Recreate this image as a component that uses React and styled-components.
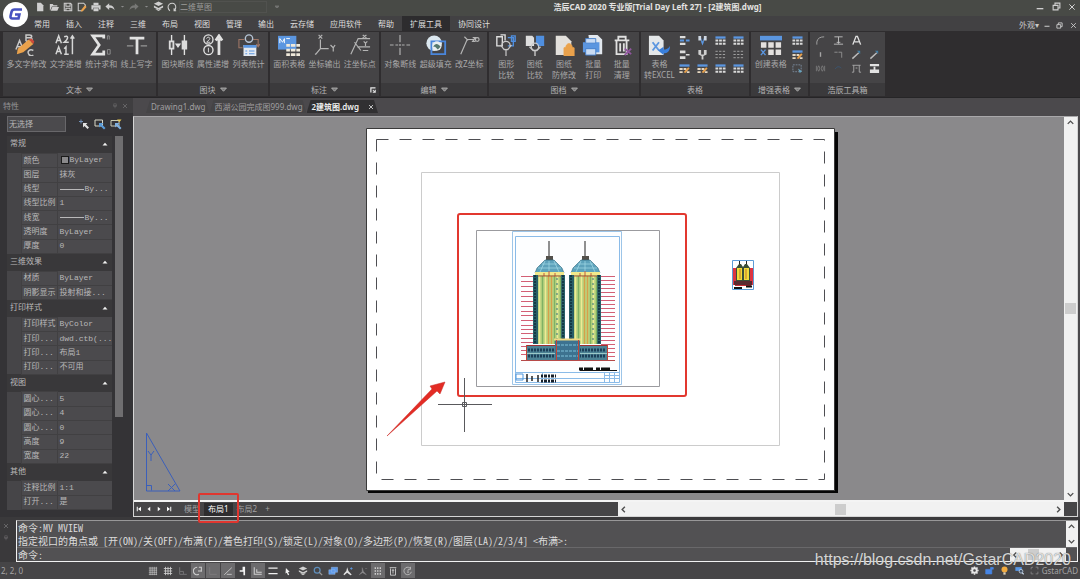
import { useState } from "react";
import styled, { createGlobalStyle, css } from "styled-components";

const GlobalStyle = createGlobalStyle`
  * {
    box-sizing: border-box;
  }
  body {
    margin: 0;
    background: #464547;
    color: #c9c8c9;
    font-family: "Noto Sans", "Noto Sans CJK SC", sans-serif;
    font-size: 8px;
    line-height: 12px;
  }
  button, select, input {
    margin: 0;
    padding: 0;
    border: none;
    background: none;
    color: inherit;
    font: inherit;
    outline: none;
  }
  svg {
    display: block;
  }
`;

const AppContainer = styled.div`
  position: relative;
  display: flex;
  flex-direction: column;
  height: 100vh;
  min-height: 560px;
  overflow: hidden;
`;

const Header = styled.header`
  display: flex;
  height: 31px;
  flex: none;
  background: linear-gradient(#484a46 0 16px, #424143 16px);
`;

const LogoButton = styled.button`
  width: 26px;
  padding-left: 2px;
  svg {
    width: 27px;
  }
`;

const HeaderRows = styled.div`
  flex: 1;
  display: flex;
  flex-direction: column;
`;

const TitleBar = styled.div`
  display: flex;
  align-items: center;
  height: 15px;
  padding: 0 0 2px 8px;
`;

const QuickTools = styled.div`
  display: flex;
  align-items: center;
  height: 12px;
  gap: 2px;
`;

const IconButton = styled.button`
  display: flex;
  flex: none;
  align-items: center;
  justify-content: center;
  width: ${({ $w }) => $w || 12}px;
  height: ${({ $h }) => $h || 12}px;
  color: ${({ $color }) => $color || "#cfcfcf"};
  background: ${({ $active }) => ($active ? "#6c6b6d" : "none")};
`;

const WorkspaceSelect = styled.select`
  width: 88px;
  height: 12px;
  margin: 0 6px 0 1px;
  border: 1px solid #51524f;
  color: #9b9b99;
  line-height: 10px;
  appearance: none;
`;

const WindowTitle = styled.h1`
  flex: 1;
  margin: 0;
  text-align: center;
  font-size: 8px;
  line-height: 12px;
  font-weight: 700;
  color: #e4e4e2;
  white-space: nowrap;
`;

const WindowButtons = styled.div`
  display: flex;
  align-items: center;
  gap: 4px;
  padding-right: 2px;
`;

const MenuRow = styled.nav`
  display: flex;
  align-items: flex-end;
  justify-content: space-between;
  height: 16px;
`;

const MenuTabs = styled.div`
  display: flex;
`;

const MenuTab = styled.button`
  height: 15px;
  padding: 0 8px;
  line-height: 14px;
  white-space: nowrap;
  color: #dededd;
  background: ${({ $active }) => ($active ? "#2d2c2e" : "none")};
`;

const Ribbon = styled.section`
  display: flex;
  flex: none;
  gap: 2px;
  height: 67px;
  padding: 1px 0 1px 3px;
  border-bottom: 1px solid #262527;
  background: #2f2d2f;
`;

const RibbonPanel = styled.div`
  display: flex;
  flex-direction: column;
  flex: 0 0 ${({ $width }) => $width}px;
  background: #454446;
`;

const RibbonBody = styled.div`
  flex: 1;
  display: flex;
  justify-content: space-evenly;
  padding-top: 2px;
`;

const RibbonButton = styled.button`
  display: flex;
  flex-direction: column;
  align-items: center;
  line-height: 11px;
  color: #a9a8a9;
  white-space: pre-line;
  svg {
    margin-bottom: 2px;
  }
`;

const SmallIconGrid = styled.div`
  display: grid;
  grid-template-columns: repeat(${({ $cols }) => $cols}, 14px);
  grid-auto-rows: 12px;
  gap: 2px 4px;
`;

const RibbonTitle = styled.div`
  position: relative;
  display: flex;
  justify-content: center;
  align-items: center;
  gap: 4px;
  height: 13px;
  color: #b4b3b4;
  background: #3b3a3c;
`;

const Launcher = styled.span`
  position: absolute;
  right: 3px;
  bottom: 3px;
`;

const Workspace = styled.main`
  flex: 1;
  display: flex;
  min-height: 0;
`;

const Properties = styled.aside`
  display: flex;
  flex-direction: column;
  flex: none;
  width: 133px;
  padding-bottom: 7px;
  background: #343336;
`;

const PropertiesTitle = styled.div`
  display: flex;
  align-items: center;
  height: 15px;
  padding: 0 3px;
  color: #949394;
  background: #3f3e40;
  span {
    flex: 1;
  }
`;

const SelectionBar = styled.div`
  display: flex;
  align-items: center;
  gap: 4px;
  padding: 3px 0 4px 7px;
  height: 23px;
`;

const SelectionSelect = styled.select`
  width: 59px;
  height: 16px;
  padding-left: 1px;
  margin-right: 8px;
  border: 1px solid #68676a;
  background: #4b4a4d;
  color: #b7b6b7;
  appearance: none;
`;

const PropertiesBody = styled.div`
  flex: 1;
  display: flex;
  min-height: 0;
  padding-left: 7px;
`;

const PropertyTable = styled.table`
  width: 105px;
  height: 100%;
  border-collapse: collapse;
  table-layout: fixed;
  font-family: "Liberation Mono", "Noto Sans CJK SC", monospace;
  line-height: 10px;
  color: #b9b8b9;
  white-space: nowrap;
  th, td {
    padding: 0;
    text-align: left;
    font-weight: 400;
  }
`;

const GroupCell = styled.th`
  height: 17px;
  background: #39383a;
  div {
    display: flex;
    align-items: center;
    justify-content: space-between;
    padding: 0 4px 0 3px;
  }
`;

const GutterCell = styled.td`
  width: 14px;
  height: 14px;
  background: #464548;
`;

const NameCell = styled.th`
  width: 36px;
  background: #4b4a4d;
  border: 1px solid #414042;
  div {
    padding-left: 2px;
  }
`;

const ValueCell = styled.td`
  overflow: hidden;
  background: #4b4a4d;
  border-bottom: 1px solid #414042;
  div {
    display: flex;
    align-items: center;
    padding-left: 2px;
  }
`;

const Swatch = styled.span`
  width: 8px;
  height: 8px;
  margin: 0 1px;
  border: 1px solid #1b1b1b;
  background: #8a898b;
`;

const LineSample = styled.span`
  width: 24px;
  height: 1px;
  margin-right: 1px;
  background: #b9b8b9;
`;

const PropertiesScroll = styled.div`
  width: 8px;
  height: 75%;
  margin-left: 3px;
  background: #6f6e70;
`;

const DocumentArea = styled.section`
  flex: 1;
  display: flex;
  flex-direction: column;
  min-width: 0;
  padding-right: 2px;
  background: #4b494c;
`;

const DocumentTabs = styled.div`
  display: flex;
  align-items: flex-end;
  height: 18px;
  padding: 0 0 3px 13px;
`;

const DocumentTab = styled.button`
  display: flex;
  align-items: center;
  gap: 9px;
  height: 13px;
  padding: 0 4px 0 5px;
  white-space: nowrap;
  color: ${({ $active }) => ($active ? "#f0f0f0" : "#a09fa0")};
  font-weight: ${({ $active }) => ($active ? 600 : 400)};
  background: ${({ $active }) => ($active ? "#313032" : "#454446")};
  clip-path: polygon(4px 0, calc(100% - 4px) 0, 100% 100%, 0 100%);
`;

const DocumentFrame = styled.div`
  flex: 1;
  display: flex;
  flex-direction: column;
  min-height: 0;
  border: 1px solid #d5d5d5;
  border-top-color: #a9a8aa;
`;

const CanvasRow = styled.div`
  flex: 1;
  display: flex;
  min-height: 0;
  background: #8a898b;
`;

const Drawing = styled.svg`
  flex: 1;
  min-width: 0;
  height: 100%;
`;

const scrollbar = css`
  display: flex;
  align-items: center;
  justify-content: space-between;
  background: #f1f1f1;
  color: #4d4d4d;
`;

const VerticalScroll = styled.div`
  ${scrollbar}
  flex-direction: column;
  width: ${({ $width }) => $width || 13}px;
`;

const HorizontalScroll = styled.div`
  ${scrollbar}
  width: ${({ $width }) => $width};
`;

const Thumb = styled.span`
  width: 11px;
  height: 11px;
  background: #cdcdcd;
`;

const LayoutRow = styled.div`
  display: flex;
  justify-content: space-between;
  height: 16px;
  padding-right: 13px;
  border-top: 2px solid #f4f4f4;
  background: #464547;
`;

const LayoutTabs = styled.div`
  display: flex;
  align-items: center;
`;

const LayoutTabList = styled(LayoutTabs)`
  flex: 1;
  padding-left: 6px;
`;

const LayoutTab = styled.button`
  height: 13px;
  padding: 0 4px;
  white-space: nowrap;
  color: ${({ $active }) => ($active ? "#ffffff" : "#a3a2a3")};
  background: ${({ $active }) => ($active ? "#2e2d2f" : "none")};
`;

const LayoutTabSlot = styled.div`
  position: relative;
`;

const TabHighlight = styled.span`
  position: absolute;
  z-index: 2;
  inset: -10px -6px -7px;
  border: 2px solid #e0362f;
  border-radius: 2px;
  pointer-events: none;
`;

const CommandArea = styled.section`
  display: flex;
  flex: none;
  height: 45px;
  padding: 3px 2px 0 0;
  background: #3a393b;
`;

const CommandGutter = styled.div`
  display: flex;
  flex-direction: column;
  width: 16px;
`;

const CommandBox = styled.div`
  flex: 1;
  display: flex;
  flex-direction: column;
  border: 1px solid #f2f2f2;
  border-top-color: #989798;
  background: #525153;
  font-family: "Noto Sans Mono CJK SC", "Noto Sans CJK SC", monospace;
  font-size: 10px;
  line-height: 13px;
  color: #dcdcdc;
`;

const CommandHistory = styled.div`
  flex: 1;
  display: flex;
  justify-content: space-between;
  border-bottom: 1px solid #69686a;
  p {
    margin: 0;
    padding-left: 1px;
    white-space: pre;
  }
`;

const CommandPrompt = styled.label`
  display: flex;
  height: 13px;
  padding-left: 1px;
  padding-right: 11px;
  input {
    flex: 1;
  }
`;

const StatusBar = styled.footer`
  display: flex;
  flex: none;
  align-items: center;
  height: 17px;
  padding: 0 2px 0 1px;
  line-height: 10px;
  color: #a5a4a5;
  background: #464547;
`;

const Coordinates = styled.output`
  width: 145px;
`;

const StatusTools = styled.div`
  flex: 1;
  display: flex;
  gap: 1px;
`;

const Watermark = styled.div`
  position: absolute;
  right: 9px;
  bottom: 10px;
  font-family: "Liberation Sans", Arial, sans-serif;
  font-size: 16px;
  line-height: 18px;
  color: rgba(240, 240, 240, 0.85);
  text-shadow: 0 0 1px rgba(60, 60, 60, 0.8);
  pointer-events: none;
`;

const BLUE = "#5b96e0";
const ORANGE = "#eaa24c";

const ICONS = {
  newFile: <path d="M5 2h9l6 6v14H5z" fill="currentColor" />,
  open: <path d="M2 5h7l2 3h9v3H7L3 20H2zM8 12h16l-4 9H4z" fill="currentColor" />,
  save: (
    <path
      d="M3 3h15l3 3v15H3zM7 3v7h10V3M7 21v-6h10v6"
      fill="none"
      stroke="currentColor"
      strokeWidth="2.5"
    />
  ),
  saveAs: (
    <>
      <path d="M3 3h13l4 4v4l-8 10H3z" fill="none" stroke="#cfcfcf" strokeWidth="2.5" />
      <path d="M10 19l9-11 4 4-9 10-5 1z" fill={ORANGE} />
    </>
  ),
  print: (
    <path d="M6 2h12v5H6zM1 8h22v10h-4v-4H5v4H1zM6 15h12v7H6z" fill="currentColor" />
  ),
  undo: <path d="M10 3v5c8 0 12 4 13 12-3-5-7-6-13-6v5L1 11z" fill="currentColor" />,
  redo: <path d="M14 3v5C6 8 2 12 1 20c3-5 7-6 13-6v5l9-8z" fill="currentColor" />,
  caret: <path d="M4 9h16l-8 8z" fill="currentColor" />,
  layers: (
    <path
      d="M12 1l10 5-10 5L2 6zM2 10l10 5 10-5v4l-10 5-10-5zM5 18l7 4 7-4"
      fill="currentColor"
    />
  ),
  refresh: (
    <path
      d="M7 21c-5-4-6-11-2-15s11-4 14 0 3 11-2 15m0-6v6h5"
      fill="none"
      stroke="currentColor"
      strokeWidth="2.5"
    />
  ),
  bars: <path d="M4 7h16v3H4zM7 14h10v2H7z" fill="currentColor" />,
  minimize: <path d="M2 15h20v4H2z" fill="currentColor" />,
  restore: (
    <path
      d="M3 9h13v12H3zM8 9V3h13v13h-5"
      fill="none"
      stroke="currentColor"
      strokeWidth="3"
    />
  ),
  close: <path d="M4 4l16 16M20 4L4 20" stroke="currentColor" strokeWidth="3" />,
  chevron: (
    <path d="M2 7l10 11L22 7z" fill="#777" stroke="currentColor" strokeWidth="3" />
  ),
  arrowUp: <path d="M6 15l6-6 6 6" fill="none" stroke="currentColor" strokeWidth="3" />,
  arrowDown: <path d="M6 9l6 6 6-6" fill="none" stroke="currentColor" strokeWidth="3" />,
  arrowLeft: <path d="M15 6l-6 6 6 6" fill="none" stroke="currentColor" strokeWidth="3" />,
  arrowRight: <path d="M9 6l6 6-6 6" fill="none" stroke="currentColor" strokeWidth="3" />,
  triangleUp: <path d="M2 18h20L12 7z" fill="#f2f2f2" />,
  launcher: (
    <path d="M1 22V1h21v5H6v16zM12 10l7 7v-6h4v12H11v-4h5l-6-6z" fill="#e8e8e8" />
  ),
  pin: <path d="M7 3h10v9H7zM4 12h16M12 12v9" fill="none" stroke="currentColor" strokeWidth="2" />,
  first: <path d="M3 3h4v18H3zM20 3v18L8 12z" fill="currentColor" />,
  prev: <path d="M17 3v18L6 12z" fill="currentColor" />,
  next: <path d="M7 3v18l11-9z" fill="currentColor" />,
  last: <path d="M17 3h4v18h-4zM4 3v18l12-9z" fill="currentColor" />,

  multiText: (
    <>
      <path d="M1 17l4-10 4 10M3 14h4M12 8V1h4c3 0 3 3 0 3h-4 4c4 0 3 4 0 4h-4M20 18c-4-2-7 1-5 4 1 2 3 2 5 1" fill="none" stroke="#c8c8c8" strokeWidth="1.6" />
      <path d="M3 16L15 6l5 5L9 20l-7 2z" fill={ORANGE} />
      <path d="M15 6l3-1 3 3-1 3z" fill="#cf4a3a" />
    </>
  ),
  textIncrement: (
    <g fill="none" stroke="#d6d6d6" strokeWidth="1.6">
      <path d="M1 10l3-8 3 8M2 7h4M1 22l3-8 3 8M2 19h4M10 3c5-2 5 2 0 6h5M10 16l2-2v8M10 22h5" />
      <path d="M19 22V3M17 5l2-3 2 3" />
    </g>
  ),
  sigma: (
    <>
      <path d="M15 5V2H3l7 10-7 10h12v-4" fill="none" stroke="#e2e2e2" strokeWidth="3" />
      <path d="M19 6V2h2v4M19 22v-5h3v5z" fill="none" stroke="#8f8f8f" strokeWidth="1" />
    </>
  ),
  lineText: (
    <>
      <path d="M4 3h16v3h-6.500v16h-3V6H4z" fill="#e2e2e2" />
      <path d="M1 13h7M16 13h7" stroke="#969696" strokeWidth="1.500" />
    </>
  ),
  breakLine: (
    <>
      <path d="M5 1v22M19 1v22M10 11h4l-2 3z" stroke="#e2e2e2" strokeWidth="1.5" fill="#e2e2e2" />
      <path d="M2 7h6v10H2zM16 7h6v10h-6z" fill="#dcdcdc" />
      <path d="M5 9v6" stroke="#555" strokeWidth="2" />
    </>
  ),
  attrIncrement: (
    <g fill="none" stroke="#e2e2e2" strokeWidth="1.5">
      <circle cx="7" cy="6" r="5" />
      <circle cx="7" cy="17.500" r="5" />
      <path d="M5 5c1-3 5-1 3 1l-3 3h4M7 15v5" strokeWidth="1" />
      <path d="M18.500 23V5M15 7l3.500-5L22 7" strokeWidth="3" />
    </g>
  ),
  listStats: (
    <>
      <path d="M5 15H1V6h6M16 6h6v7M20 11l2 3 2-3" fill="none" stroke="#9d7565" strokeWidth="1.2" />
      <circle cx="12" cy="5" r="4" fill="none" stroke="#b6c5d6" strokeWidth="1.500" />
      <path d="M6 12h14v12H6z" fill="#e3e9f0" />
      <path d="M6 12h14v3H6zM8 18h2v1H8zM8 21h2v1H8zM12 18h6v1h-6zM12 21h6v1h-6z" fill={BLUE} />
    </>
  ),
  areaTable: (
    <>
      <path d="M0 2h20v15H0z" fill={BLUE} />
      <path d="M2 10V5l3 4 2-4v5M9 5h4" stroke="#fff" fill="none" />
      <path d="M9 11h4v3H9zM14 11h5v3h-5zM20 11h4v3h-4zM9 16h4v3H9zM14 16h5v3h-5zM20 16h4v3h-4zM9 21h4v3H9zM14 21h5v3h-5zM20 21h4v3h-4z" fill="#efe9da" />
    </>
  ),
  coordOutput: (
    <g fill="none" stroke="#b5b5b5" strokeWidth="1.300">
      <path d="M7 6v10h9M7 16l-5 6h-1M5 1l4 4M9 1L5 5M18 12l3 3 2-3M21 15v4" />
    </g>
  ),
  coordMark: (
    <g fill="none" stroke="#b5b5b5" strokeWidth="1.300">
      <path d="M2 22L10 5h13M6 9l7 9M12 14h11M9 14h3M15 1l4 3M19 1l-4 3M16 8l2 2 2-2M18 10v3M15 18h6" />
    </g>
  ),
  alignBreak: (
    <path d="M12 1v8M12 15v8M1 12h4M7 12h3M14 12h3M19 12h4M12 11v2" stroke="#b0b0b0" strokeWidth="1.300" />
  ),
  superFill: (
    <>
      <circle cx="10" cy="10" r="8.500" fill="#dbe7ef" />
      <path d="M7 8h15v14H7z" fill="none" stroke="#4a86dc" strokeWidth="2" />
      <circle cx="13" cy="13" r="5" fill="#e8eef0" />
      <path d="M9 14c2-4 5-4 8 0l-3 3-3-3z" fill="#54786f" />
    </>
  ),
  zCoord: (
    <path d="M3 22L10 6h7M7 3l4 4M16 4h3l-3 4h3M21 4a2 2 0 1 1 0 4 2 2 0 0 1 0-4" fill="none" stroke="#b5b5b5" strokeWidth="1.300" />
  ),
  compareShape: (
    <>
      <path d="M2 3h6v10H2zM6 1h5v6" fill="none" stroke="#dedede" strokeWidth="1.500" />
      <path d="M14 4h6v9h-6M18 2h4v6h-4z" fill="none" stroke="#4f8fe0" strokeWidth="1.500" />
      <path d="M6 12l4 5h4l4-5M12 8a4.500 4.500 0 1 1 0 9 4.500 4.500 0 0 1 0-9M12 17v7" fill="none" stroke="#c9c9c9" strokeWidth="1.300" />
    </>
  ),
  compareSheet: (
    <>
      <path d="M2 2h7l2 2v9H2z" fill="#dedede" />
      <path d="M13 2h9v11h-7l-2-3z" fill="#4f8fe0" />
      <path d="M6 14l4 4h4l4-4M12 18v6" fill="none" stroke="#c9c9c9" strokeWidth="1.500" />
      <circle cx="12" cy="14" r="4" fill="none" stroke="#c9c9c9" strokeWidth="1.300" />
    </>
  ),
  sheetLock: (
    <>
      <path d="M3 2h11l6 6v15H3z" fill="#e3e0dc" />
      <path d="M12 15h11v9H12zM14 15c0-6 7-6 7 0" fill={ORANGE} stroke={ORANGE} />
    </>
  ),
  batchPrint: (
    <>
      <path d="M7 1h10l5 5v16H10" fill="#e2e8ef" />
      <path d="M1 9h18v11H1z" fill={BLUE} />
      <path d="M4 5h11v5H4zM4 16h11v7H4z" fill="#c9dcf4" stroke="#447fca" strokeWidth="1" />
    </>
  ),
  batchClean: (
    <>
      <path d="M4 7h16M8 7V3h8v4M6 7v15h11V7M10 10v9M14 10v9" fill="none" stroke="#e0e0e0" strokeWidth="2" />
      <path d="M15 16l7 6M22 16l-7 7" stroke="#91569f" strokeWidth="2" />
    </>
  ),
  toExcel: (
    <>
      <path d="M1 2h11l5 5v16H1z" fill="#e4e7e9" />
      <path d="M5 9l7 9M12 9l-7 9" stroke={BLUE} strokeWidth="2" />
      <path d="M11 18l6-4v3c3 0 5-1 7-4 0 6-3 8-7 8v2z" fill="#397fdc" />
    </>
  ),
  createTable: (
    <>
      <path d="M0 2h24v5H0z" fill={BLUE} />
      <path d="M1 9h6v6H1zM9 9h6v6H9zM17 9h6v6h-6zM9 17h6v6H9zM17 17h6v6h-6z" fill="#e3e0de" />
      <path d="M1 17l5 6M6 17l-5 6" stroke={BLUE} strokeWidth="1.500" />
    </>
  ),

  rowInsert: (
    <>
      <path d="M2 2h12v5H2zM2 17h12v5H2z" fill="#dcdcdc" />
      <path d="M2 10h9v4H2zM15 10h8v4h-8z" fill={BLUE} />
    </>
  ),
  colInsert: (
    <>
      <path d="M3 2h6v10H3zM15 2h6v10h-6z" fill="#cfd7e2" />
      <path d="M9 6l3 8 3-8v9l-3 8-3-8z" fill={BLUE} />
    </>
  ),
  rowPlain: <path d="M2 3h12v6H2zM2 16h12v6H2zM15 11h8v3h-8z" fill="#dcdcdc" />,
  colPlain: <path d="M3 2h6v10h6V2h6v10l-7 3v8h-4v-8l-7-3z" fill="#cfcfcf" />,
  tableBlue: (
    <>
      <path d="M1 3h22v5H1z" fill={BLUE} />
      <path d="M1 10h6v4H1zM9 10h6v4H9zM17 10h6v4h-6zM1 17h6v4H1zM9 17h6v4H9zM17 17h6v4h-6z" fill="#dadada" />
    </>
  ),
  tableDotted: (
    <path d="M1 5h22M1 12h22M1 19h22" stroke="#a9a9a9" strokeWidth="2" strokeDasharray="5 3" />
  ),
  tableOrange: (
    <>
      <path d="M1 3h22v5H1z" fill={BLUE} />
      <path d="M1 11h7v4H1zM10 11h6v4h-6zM1 18h7v4H1zM17 18h6v4h-6z" fill="#e6d8c2" />
      <path d="M10 20L20 9l3 3-9 10z" fill={ORANGE} />
    </>
  ),
  selectTable: (
    <>
      <path d="M2 4h18v15H2z" fill="none" stroke="#79899a" strokeWidth="2" strokeDasharray="4 2" />
      <path d="M13 12l9 6-5 4z" fill="#68a4bf" />
    </>
  ),

  arc: <path d="M4 21V15C5 7 12 4 20 4" fill="none" stroke="#a7a7a7" strokeWidth="2" />,
  beam: <path d="M3 4h18M12 4v15M8 16h8M2 20h20" fill="none" stroke="#bfbfbf" strokeWidth="2" />,
  letterA: <path d="M4 21L11 3h3l7 18M8 15h9" fill="none" stroke="#e0e0e0" strokeWidth="3" />,
  tick: <path d="M12 7v10" stroke="#a5a5a5" strokeWidth="3" />,
  corner: <path d="M3 7h7M12 7h7v12" fill="none" stroke="#929292" strokeWidth="2" />,
  pencil: (
    <>
      <path d="M3 21L17 8" stroke="#bdbdbd" strokeWidth="3" />
      <path d="M13 4h7v7z" fill="#427ea5" />
    </>
  ),
  zeros: (
    <path d="M3 6v12M8 6c-3 4-3 8 0 12 3-4 3-8 0-12M16 6c-3 4-3 8 0 12 3-4 3-8 0-12M21 6v12" fill="none" stroke="#8b8b8b" strokeWidth="1.500" />
  ),
  dot: <path d="M5 13c3-6 9-6 13-2" fill="none" stroke="#3a5675" strokeWidth="2" />,
  gate: <path d="M3 5h18M6 5v15H2M18 5v15h4M10 11h4" fill="none" stroke="#a8a8a8" strokeWidth="2" />,
  stamp: <path d="M2 2h20v5H2zM10 8h4v6h-4zM2 14h20v8H2z" fill="#e2e2e2" />,

  pickAdd: (
    <>
      <path d="M6 3v8M2 7h8" stroke="#7392ba" strokeWidth="2" />
      <path d="M10 10h9l-3 3 6 6-3 3-6-6-3 3z" fill="#e1e1e1" />
    </>
  ),
  pickWindow: (
    <>
      <path d="M2 4h15v12H2z" fill="none" stroke="#d9d9c8" strokeWidth="2" />
      <path d="M10 10h9l-3 3 7 7-3 3-7-7-3 3z" fill="#5a9bd8" />
    </>
  ),
  pickFilter: (
    <>
      <path d="M2 5h16v11H2z" fill="none" stroke="#c9cbb4" strokeWidth="2" />
      <path d="M14 3h9l-4 5z" fill="#e8c952" />
      <path d="M10 10h9l-3 3 7 7-3 3-7-7-3 3z" fill="#7fb0e0" />
    </>
  ),

  snap: <path d="M5 2v20M10 2v20M15 2v20M20 2v20M2 5h20M2 10h20M2 15h20M2 20h20" stroke="currentColor" strokeWidth="1.500" />,
  grid: <path d="M6 2v20M12 2v20M18 2v20M2 6h20M2 12h20M2 18h20" stroke="currentColor" strokeWidth="2" />,
  ortho: <path d="M4 3v17h17M5 13h8v6" fill="none" stroke="#7d7c7e" strokeWidth="2" />,
  polar: <path d="M10 3a9 9 0 1 0 4 17M14 3h6v11M12 12h9" fill="none" stroke="currentColor" strokeWidth="2.500" />,
  osnap: <path d="M4 3v17h17" fill="none" stroke="#858486" strokeWidth="1.500" />,
  otrack: <path d="M3 21L21 4M9 20h12" fill="none" stroke="currentColor" strokeWidth="2" />,
  dynUcs: <path d="M11 2h6v20h-4v-8H4v-4h7z" fill="#f2f2f2" />,
  dynInput: <path d="M3 3v17h18M9 8v7h12" fill="none" stroke="currentColor" strokeWidth="2.500" />,
  lineWeight: <path d="M1 5h22M1 18h22" stroke="#efefef" strokeWidth="3" />,
  cursor: <path d="M7 5l9 9-4 1 3 6-3 1-3-6-3 2z" fill="#ededed" />,
  search: (
    <>
      <circle cx="10" cy="10" r="7" fill="none" stroke="#5f8fbd" strokeWidth="3" />
      <path d="M15 15l7 7" stroke="#9a9a9a" strokeWidth="3" />
    </>
  ),
  quickView: <path d="M8 3h15v12H8zM2 9h15v11H2z" fill="#5d98e8" stroke="#a6c6f0" strokeWidth="1" />,
  annoScale: (
    <>
      <path d="M10 3l3 9 8 9-3 1-8-6-7 6-2-2 7-8z" fill="#e1e1e1" />
      <path d="M17 6h6M20 3v6" stroke={BLUE} strokeWidth="2" />
    </>
  ),
  annoAuto: <path d="M10 4l3 9 7 8-9-5-8 5 7-8zM17 6h5" fill="#8c8b8d" stroke="#8c8b8d" />,
  sheetGrid: (
    <path d="M4 5h16M4 12h16M4 19h16" stroke="#d6d6d6" strokeWidth="4" strokeDasharray="3 3" />
  ),
  cleanScreen: <path d="M4 4h16M6 6v16h12V6M12 8v10M9 10h6" fill="none" stroke="#d7d7d7" strokeWidth="2" />,
  cycle: <path d="M17 5a9 9 0 1 0 3 9M18 2v6h-6M12 9v5M10 15h4" fill="none" stroke="#c1c1c1" strokeWidth="2" />,
  gear: (
    <>
      <circle cx="12" cy="12" r="6" fill="none" stroke="#e6e6e6" strokeWidth="5" />
      <path d="M12 1v4M12 19v4M1 12h4M19 12h4M4 4l3 3M17 17l3 3M4 20l3-3M17 7l3-3" stroke="#e6e6e6" strokeWidth="4" />
    </>
  ),
  lock: <path d="M2 9h16v12H2zM15 9V4h7v5" fill="#4684e3" stroke="#4684e3" strokeWidth="2" />,
  bulb: (
    <>
      <circle cx="12" cy="9" r="8" fill="#f1aa3f" />
      <path d="M9 17h6v6H9z" fill="#ddd1bb" />
    </>
  ),
  monitor: (
    <>
      <path d="M1 3h17v10H1z" fill="#5797e6" />
      <circle cx="16" cy="14" r="5" fill="#46566b" stroke="#c7d6e8" strokeWidth="2" />
      <path d="M19 18l4 4" stroke="#c7d6e8" strokeWidth="3" />
    </>
  ),
  frame: (
    <path d="M3 9V4l5-1M15 3h6v6M21 15v6h-6M9 21H3v-6" fill="none" stroke="#8e8d8f" strokeWidth="2" />
  ),
};

function Icon({ name, size = 12 }) {
  return (
    <svg width={size} height={size} viewBox="0 0 24 24" aria-hidden="true">
      {ICONS[name]}
    </svg>
  );
}

const menus = [
  "常用",
  "插入",
  "注释",
  "三维",
  "布局",
  "视图",
  "管理",
  "输出",
  "云存储",
  "应用软件",
  "帮助",
  "扩展工具",
  "协同设计",
];

const ribbonPanels = [
  {
    title: "文本",
    width: 153,
    arrow: true,
    tools: [
      ["multiText", "多文字修改"],
      ["textIncrement", "文字递增"],
      ["sigma", "统计求和"],
      ["lineText", "线上写字"],
    ],
  },
  {
    title: "图块",
    width: 110,
    arrow: true,
    tools: [
      ["breakLine", "图块断线"],
      ["attrIncrement", "属性递增"],
      ["listStats", "列表统计"],
    ],
  },
  {
    title: "标注",
    width: 109,
    arrow: true,
    launcher: true,
    tools: [
      ["areaTable", "面积表格"],
      ["coordOutput", "坐标输出"],
      ["coordMark", "注坐标点"],
    ],
  },
  {
    title: "编辑",
    width: 106,
    arrow: true,
    tools: [
      ["alignBreak", "对象断线"],
      ["superFill", "超级填充"],
      ["zCoord", "改Z坐标"],
    ],
  },
  {
    title: "图档",
    width: 150,
    arrow: true,
    tools: [
      ["compareShape", "图形\n比较"],
      ["compareSheet", "图纸\n比较"],
      ["sheetLock", "图纸\n防修改"],
      ["batchPrint", "批量\n打印"],
      ["batchClean", "批量\n清理"],
    ],
  },
  {
    title: "表格",
    width: 108,
    tools: [["toExcel", "表格\n转EXCEL"]],
    cols: 4,
    small: [
      "rowInsert",
      "colInsert",
      "tableBlue",
      "tableBlue",
      "rowPlain",
      "colPlain",
      "tableDotted",
      "tableDotted",
      "tableOrange",
      "tableOrange",
      "tableBlue",
      "tableBlue",
    ],
  },
  {
    title: "增强表格",
    width: 57,
    arrow: true,
    tools: [["createTable", "创建表格"]],
    cols: 1,
    small: ["tableBlue", "tableOrange", "selectTable"],
  },
  {
    title: "浩辰工具箱",
    width: 75,
    tools: [],
    cols: 4,
    small: [
      "arc",
      "beam",
      "letterA",
      null,
      "tick",
      "corner",
      "pencil",
      "pencil",
      "zeros",
      "dot",
      "gate",
      "stamp",
    ],
  },
];

const propertyGroups = [
  {
    title: "常规",
    rows: [
      ["颜色", "ByLayer", "swatch"],
      ["图层", "抹灰"],
      ["线型", "By...", "line"],
      ["线型比例", "1"],
      ["线宽", "By...", "line"],
      ["透明度", "ByLayer"],
      ["厚度", "0"],
    ],
  },
  {
    title: "三维效果",
    rows: [
      ["材质", "ByLayer"],
      ["阴影显示", "投射和接..."],
    ],
  },
  {
    title: "打印样式",
    rows: [
      ["打印样式", "ByColor"],
      ["打印...", "dwd.ctb(..."],
      ["打印...", "布局1"],
      ["打印...", "不可用"],
    ],
  },
  {
    title: "视图",
    rows: [
      ["圆心...", "5"],
      ["圆心...", "4"],
      ["圆心...", "0"],
      ["高度", "9"],
      ["宽度", "22"],
    ],
  },
  {
    title: "其他",
    rows: [
      ["注释比例", "1:1"],
      ["打开...", "是"],
    ],
  },
];

const statusTools = [
  ["snap"],
  ["grid"],
  ["ortho"],
  ["polar", true],
  ["osnap", true],
  ["otrack", true],
  ["dynUcs"],
  ["dynInput", true],
  ["lineWeight"],
  ["cursor"],
  ["layers"],
  ["search"],
  ["quickView"],
  ["annoScale"],
  ["annoAuto"],
  ["sheetGrid", true],
  ["cleanScreen"],
  ["cycle", true],
];

function RibbonGroup({ panel }) {
  return (
    <RibbonPanel $width={panel.width}>
      <RibbonBody>
        {panel.tools.map(([icon, label]) => (
          <RibbonButton key={label}>
            <Icon name={icon} size={22} />
            {label}
          </RibbonButton>
        ))}
        {panel.small && (
          <SmallIconGrid $cols={panel.cols}>
            {panel.small.map((icon, index) =>
              icon ? (
                <IconButton key={index} $w={14} aria-label={icon}>
                  <Icon name={icon} size={11} />
                </IconButton>
              ) : (
                <span key={index} />
              )
            )}
          </SmallIconGrid>
        )}
      </RibbonBody>
      <RibbonTitle>
        {panel.title}
        {panel.arrow && <Icon name="chevron" size={7} />}
        {panel.launcher && (
          <Launcher>
            <Icon name="launcher" size={6} />
          </Launcher>
        )}
      </RibbonTitle>
    </RibbonPanel>
  );
}

function PropertyGroup({ group }) {
  return (
    <tbody>
      <tr>
        <GroupCell colSpan={3}>
          <div>
            {group.title}
            <Icon name="triangleUp" size={6} />
          </div>
        </GroupCell>
      </tr>
      {group.rows.map(([name, value, sample], index) => (
        <tr key={index}>
          <GutterCell />
          <NameCell scope="row">
            <div>{name}</div>
          </NameCell>
          <ValueCell>
            <div>
              {sample === "swatch" && <Swatch />}
              {sample === "line" && <LineSample />}
              {value}
            </div>
          </ValueCell>
        </tr>
      ))}
    </tbody>
  );
}

function Tower({ x }) {
  const columns = [0, 1, 2, 3, 4, 5, 6, 7];
  return (
    <g transform={`translate(${x} 0)`}>
      <path d="M16 241v16" stroke="#222" strokeWidth="1" />
      <path d="M13 256h7v4h-7z" fill="#53504b" />
      <path d="M12 260h9l8 8 2 5H2l2-5z" fill="#5da2bb" stroke="#30687e" strokeWidth="0.6" />
      <path d="M9 264h15M5 268h23M12 261l-5 11M16 261v11M21 261l5 11" stroke="#a5dbe8" strokeWidth="0.7" />
      <path d="M2 272h29v4H2z" fill="#f2e98b" />
      <path d="M0 275h5v69H0zM28 275h4v69h-4z" fill="#285e68" />
      <path d="M2 275v69M30 275v69" stroke="#0f2e3b" strokeWidth="1.500" strokeDasharray="2 1" />
      <path d="M5 275h23v69H5z" fill="#b9d47f" />
      {columns.map((c) => (
        <path
          key={c}
          d={`M${6.5 + c * 3} 276v68`}
          stroke={c === 3 || c === 4 ? "#d6a04a" : c % 2 ? "#7fb163" : "#f0ea94"}
          strokeWidth="1.400"
        />
      ))}
      <path d="M5 276h23M16 271v5M11 273v3M22 273v3" stroke="#b3372c" strokeWidth="0.8" />
      <path d="M24 278v65" stroke="#35757a" strokeWidth="1" strokeDasharray="2 3" />
    </g>
  );
}

const leftLevels = [276, 281, 286, 291, 296, 301, 306, 311, 315, 320, 325, 329, 333, 338, 342, 346, 350, 354];
const rightLevels = [276, 280, 284, 288, 292, 296, 300, 304, 308, 312, 316, 320, 324, 328, 332, 336, 340, 344, 348, 352, 356];

function Sheet() {
  return (
    <g fill="none">
      <path d="M512.500 231.500h109v153h-109z" stroke="#9dc5e8" fill="#fdfeff" />
      <path d="M515.500 236.500h104v146h-104z" stroke="#8abbe8" />
      <path
        d={leftLevels.map((y) => `M521 ${y}.5h12`).join("")}
        stroke="#d25f75"
      />
      <path
        d={rightLevels.map((y) => `M601 ${y}.5h14`).join("")}
        stroke="#d25f75"
      />
      <Tower x={533} />
      <Tower x={569} />
      <path d="M526 345h82v15h-82z" fill="#4c8294" />
      <path d="M526 345.500h82" stroke="#a03030" />
      <path d="M528 350h78M528 356h78" stroke="#1c3f58" strokeWidth="3" strokeDasharray="2 1" />
      <path d="M527 353.500h80" stroke="#9dc9c8" />
      <path d="M555 339h25v21h-25z" fill="#3d7290" />
      <path d="M554 339.500h27" stroke="#f0d982" strokeWidth="2" />
      <path d="M557 345h21M557 351h21M557 356h21" stroke="#7ec0d9" strokeDasharray="3 1" />
      <path d="M556.500 340v20M578.500 340v20M526.500 345v15M607.500 345v15" stroke="#c24436" />
      <path d="M521 360.500h94" stroke="#b64a49" />
      <path d="M579 369h15M596 369h14" stroke="#111" strokeWidth="3" strokeDasharray="4 1 9 1" />
      <path d="M580 370.500h37" stroke="#111" />
      <path d="M515 372.500h104M515 378.500h104M542.500 372v11M604.500 372v11M609.500 372v11M614.500 372v11M604 375.500h15" stroke="#8abbe8" />
      <path d="M516 374h7v6h-7z" stroke="#4f96dc" />
      <path d="M527 374v8M532 376v5M538 375v7" stroke="#222" strokeWidth="1.500" />
      <path d="M541 376h15M541 381h15" stroke="#16202c" strokeWidth="3" strokeDasharray="2 1 3 1" />
    </g>
  );
}

function Thumbnail() {
  return (
    <g fill="none">
      <path d="M732.500 260.500h21v29h-21z" fill="#fff" stroke="#5c9bd6" />
      <path d="M733 268h4v17h-4zM749 268h4v17h-4z" fill="#dd3340" />
      <path d="M739.500 261v5M746.500 261v5" stroke="#222" />
      <path d="M736 268l3-4h2l2 3 2-3h2l3 4v13h-14z" fill="#3a4f38" />
      <path d="M737 268h5v12h-5zM744 268h5v12h-5z" fill="#f0dc3a" />
      <path d="M740 269v10M746 269v10" stroke="#c1742c" />
      <path d="M734 281h18v4h-18z" fill="#5a2a30" />
      <path d="M735 285.500h16" stroke="#c92c35" />
      <path d="M734 288h8M746 286.500h6" stroke="#111" strokeWidth="2" />
    </g>
  );
}

function PaperSpace() {
  return (
    <Drawing viewBox="134 117 930 383" role="img" aria-label="布局1">
      <path d="M368 132h470v361H368z" fill="#050505" />
      <path d="M366.500 128.500h468v362h-468z" fill="#fff" stroke="#3a3a3a" />
      <path
        d="M376.500 139.500h448v340h-448z"
        fill="none"
        stroke="#4e4e52"
        strokeDasharray="12 11"
      />
      <path d="M421.500 172.500h358v273h-358z" fill="none" stroke="#cccccc" />
      <path d="M476.500 230.500h183v156h-183z" fill="none" stroke="#9b9b9f" />
      <Sheet />
      <Thumbnail />
      <rect x="458" y="214" width="228" height="182" rx="2" fill="none" stroke="#e2382f" strokeWidth="2" />
      <path d="M387 436l45-47-2-3 15-4-5 12-3-3z" fill="#e32c25" stroke="#c82a25" strokeWidth="0.5" />
      <path d="M438 404.500h54M464.500 378v54M462.500 402.500h4v4h-4z" fill="none" stroke="#59595c" />
      <g fill="none" stroke="#3b5fba">
        <path d="M146.500 433v58H180L146.500 433M146.500 485.500h5v5" />
        <path d="M148 451l3 4 3-4M151 455v6M168 484l7 7M175 484l-7 7" />
      </g>
    </Drawing>
  );
}

export default function App() {
  const [activeMenu, setActiveMenu] = useState("扩展工具");
  const [activeLayout, setActiveLayout] = useState("布局1");
  const [command, setCommand] = useState("");

  return (
    <AppContainer>
      <GlobalStyle />
      <Header>
        <LogoButton aria-label="GstarCAD">
          <svg width="27" height="27" viewBox="0 0 27 27">
            <circle cx="13.500" cy="12.500" r="12.500" fill="#fff" />
            <path
              d="M20 7.500h-7.500c-1.600 0-2.500.8-2.900 2.200l-1 4c-.4 1.800.2 2.800 1.800 2.800h6.100l.9-4H13"
              fill="none"
              stroke="#4652c0"
              strokeWidth="2.600"
            />
          </svg>
        </LogoButton>
        <HeaderRows>
          <TitleBar>
            <QuickTools>
              {["newFile", "open", "save", "saveAs", "print", "undo"].map((name) => (
                <IconButton key={name} aria-label={name}>
                  <Icon name={name} size={10} />
                </IconButton>
              ))}
              <IconButton $w={8} $color="#8b8b8b" aria-label="undo list">
                <Icon name="caret" size={5} />
              </IconButton>
              <IconButton $color="#777876" aria-label="redo">
                <Icon name="redo" size={10} />
              </IconButton>
              <IconButton $w={8} $color="#8b8b8b" aria-label="redo list">
                <Icon name="caret" size={5} />
              </IconButton>
              <IconButton aria-label="layers">
                <Icon name="layers" size={11} />
              </IconButton>
              <IconButton aria-label="refresh">
                <Icon name="refresh" size={10} />
              </IconButton>
            </QuickTools>
            <WorkspaceSelect aria-label="工作空间">
              <option>二维草图</option>
            </WorkspaceSelect>
            <IconButton $w={8} $color="#999" aria-label="customize">
              <Icon name="bars" size={6} />
            </IconButton>
            <WindowTitle>
              浩辰CAD 2020 专业版[Trial Day Left 27] - [2建筑图.dwg]
            </WindowTitle>
            <WindowButtons>
              <IconButton aria-label="minimize">
                <Icon name="minimize" size={8} />
              </IconButton>
              <IconButton aria-label="restore">
                <Icon name="restore" size={9} />
              </IconButton>
              <IconButton aria-label="close">
                <Icon name="close" size={8} />
              </IconButton>
            </WindowButtons>
          </TitleBar>
          <MenuRow>
            <MenuTabs>
              {menus.map((menu) => (
                <MenuTab
                  key={menu}
                  $active={menu === activeMenu}
                  onClick={() => setActiveMenu(menu)}
                >
                  {menu}
                </MenuTab>
              ))}
            </MenuTabs>
            <WindowButtons>
              <button>外观▾</button>
              <IconButton $w={8} aria-label="minimize drawing">
                <Icon name="minimize" size={6} />
              </IconButton>
              <IconButton $w={9} aria-label="restore drawing">
                <Icon name="restore" size={7} />
              </IconButton>
              <IconButton $w={10} aria-label="close drawing">
                <Icon name="close" size={7} />
              </IconButton>
            </WindowButtons>
          </MenuRow>
        </HeaderRows>
      </Header>

      <Ribbon>
        {ribbonPanels.map((panel) => (
          <RibbonGroup key={panel.title} panel={panel} />
        ))}
      </Ribbon>

      <Workspace>
        <Properties>
          <PropertiesTitle>
            <span>特性</span>
            <IconButton $w={10} $color="#717072" aria-label="pin">
              <Icon name="pin" size={6} />
            </IconButton>
            <IconButton $w={10} $color="#717072" aria-label="close properties">
              <Icon name="close" size={6} />
            </IconButton>
          </PropertiesTitle>
          <SelectionBar>
            <SelectionSelect aria-label="选择">
              <option>无选择</option>
            </SelectionSelect>
            {["pickAdd", "pickWindow", "pickFilter"].map((name) => (
              <IconButton key={name} aria-label={name}>
                <Icon name={name} size={12} />
              </IconButton>
            ))}
          </SelectionBar>
          <PropertiesBody>
            <PropertyTable>
              <colgroup>
                <col width="14" />
                <col width="36" />
                <col />
              </colgroup>
              {propertyGroups.map((group) => (
                <PropertyGroup key={group.title} group={group} />
              ))}
            </PropertyTable>
            <PropertiesScroll />
          </PropertiesBody>
        </Properties>

        <DocumentArea>
          <DocumentTabs>
            <DocumentTab>Drawing1.dwg</DocumentTab>
            <DocumentTab>西湖公园完成图999.dwg</DocumentTab>
            <DocumentTab $active>
              2建筑图.dwg
              <Icon name="close" size={6} />
            </DocumentTab>
          </DocumentTabs>
          <DocumentFrame>
            <CanvasRow>
              <PaperSpace />
              <VerticalScroll>
                <Icon name="arrowUp" size={11} />
                <Thumb />
                <Icon name="arrowDown" size={11} />
              </VerticalScroll>
            </CanvasRow>
            <LayoutRow>
              <LayoutTabs>
                {["first", "prev", "next", "last"].map((name) => (
                  <IconButton key={name} $w={10} $color="#fff" aria-label={name}>
                    <Icon name={name} size={6} />
                  </IconButton>
                ))}
              </LayoutTabs>
              <LayoutTabList>
                {["模型", "布局1", "布局2"].map((name) => (
                  <LayoutTabSlot key={name}>
                    <LayoutTab
                      $active={name === activeLayout}
                      onClick={() => setActiveLayout(name)}
                    >
                      {name}
                    </LayoutTab>
                    {name === "布局1" && <TabHighlight />}
                  </LayoutTabSlot>
                ))}
                <LayoutTab>+</LayoutTab>
              </LayoutTabList>
              <HorizontalScroll $width="48%">
                <Icon name="arrowLeft" size={11} />
                <Thumb />
                <Icon name="arrowRight" size={11} />
              </HorizontalScroll>
            </LayoutRow>
          </DocumentFrame>
        </DocumentArea>
      </Workspace>

      <CommandArea>
        <CommandGutter>
          <IconButton $color="#747375" aria-label="close command line">
            <Icon name="close" size={6} />
          </IconButton>
          <IconButton $color="#747375" aria-label="pin command line">
            <Icon name="pin" size={6} />
          </IconButton>
        </CommandGutter>
        <CommandBox>
          <CommandHistory>
            <p>
              {"命令:MV MVIEW\n指定视口的角点或 [开(ON)/关(OFF)/布满(F)/着色打印(S)/锁定(L)/对象(O)/多边形(P)/恢复(R)/图层(LA)/2/3/4] <布满>:"}
            </p>
            <VerticalScroll $width={11}>
              <Icon name="arrowUp" size={11} />
              <Icon name="arrowDown" size={11} />
            </VerticalScroll>
          </CommandHistory>
          <CommandPrompt>
            命令:
            <input value={command} onChange={(e) => setCommand(e.target.value)} />
            <HorizontalScroll $width="56px">
              <Icon name="arrowLeft" size={10} />
              <Thumb />
              <span />
              <Icon name="arrowRight" size={10} />
            </HorizontalScroll>
          </CommandPrompt>
        </CommandBox>
      </CommandArea>

      <StatusBar>
        <Coordinates>2, 2, 0</Coordinates>
        <StatusTools>
          {statusTools.map(([name, active]) => (
            <IconButton key={name} $w={14} $h={15} $active={active} aria-label={name}>
              <Icon name={name} size={10} />
            </IconButton>
          ))}
        </StatusTools>
        {["gear", "lock", "bulb", "monitor", "frame"].map((name) => (
          <IconButton key={name} $w={15} aria-label={name}>
            <Icon name={name} size={9} />
          </IconButton>
        ))}
        <span>GstarCAD</span>
      </StatusBar>
      <Watermark>https://blog.csdn.net/GstarCAD2020</Watermark>
    </AppContainer>
  );
}
